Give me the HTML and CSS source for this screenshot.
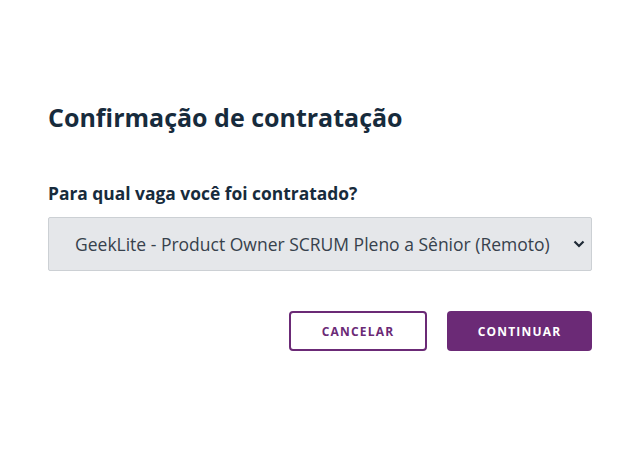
FILE: index.html
```html
<!DOCTYPE html>
<html lang="pt-BR">
<head>
<meta charset="utf-8">
<link rel="stylesheet" href="styles.css">
</head>
<body>
<div class="modal">
  <h1 class="title">Confirmação de contratação</h1>
  <label class="label">Para qual vaga você foi contratado?</label>
  <div class="select">
    <span class="select-text">GeekLite - Product Owner SCRUM Pleno a Sênior (Remoto)</span>
    <svg class="chevron" width="12" height="8" viewBox="0 0 12 8"><path d="M1.5 1.5 L6 6 L10.5 1.5" fill="none" stroke="#1f2a36" stroke-width="2.2"/></svg>
  </div>
  <div class="actions">
    <button class="btn btn-outline">CANCELAR</button>
    <button class="btn btn-primary">CONTINUAR</button>
  </div>
</div>
</body>
</html>
```
FILE: styles.css
```css
html, body { margin: 0; padding: 0; background: #fff; }
body { font-family: "Open Sans", sans-serif; }
.modal { width: 544px; padding: 96px 0 0 48px; display: flex; flex-direction: column; }
.title { margin: 0; font-size: 25px; font-weight: 700; color: #172b3c; line-height: 42px; }
.label { margin-top: 43px; font-size: 17.4px; font-weight: 700; color: #172b3c; line-height: 24px; }
.select { margin-top: 12px; border: 1px solid #ccd0d4; background: #e5e7ea; border-radius: 2px; display: flex; align-items: center; justify-content: space-between; padding: 0 6px 0 26px; box-sizing: border-box; height: 54px; }
.select-text { font-size: 17.5px; color: #37414c; }
.chevron { display: block; }
.actions { display: flex; justify-content: flex-end; gap: 20px; margin-top: 40px; }
.btn { font-family: "Open Sans", sans-serif; font-size: 12px; font-weight: 700; letter-spacing: 1.2px; height: 40px; border-radius: 4px; box-sizing: border-box; cursor: pointer; }
.btn-outline { width: 138px; background: #fff; color: #6b2a76; border: 2px solid #6b2a76; }
.btn-primary { width: 145px; background: #6b2a76; color: #fff; border: none; }
```
